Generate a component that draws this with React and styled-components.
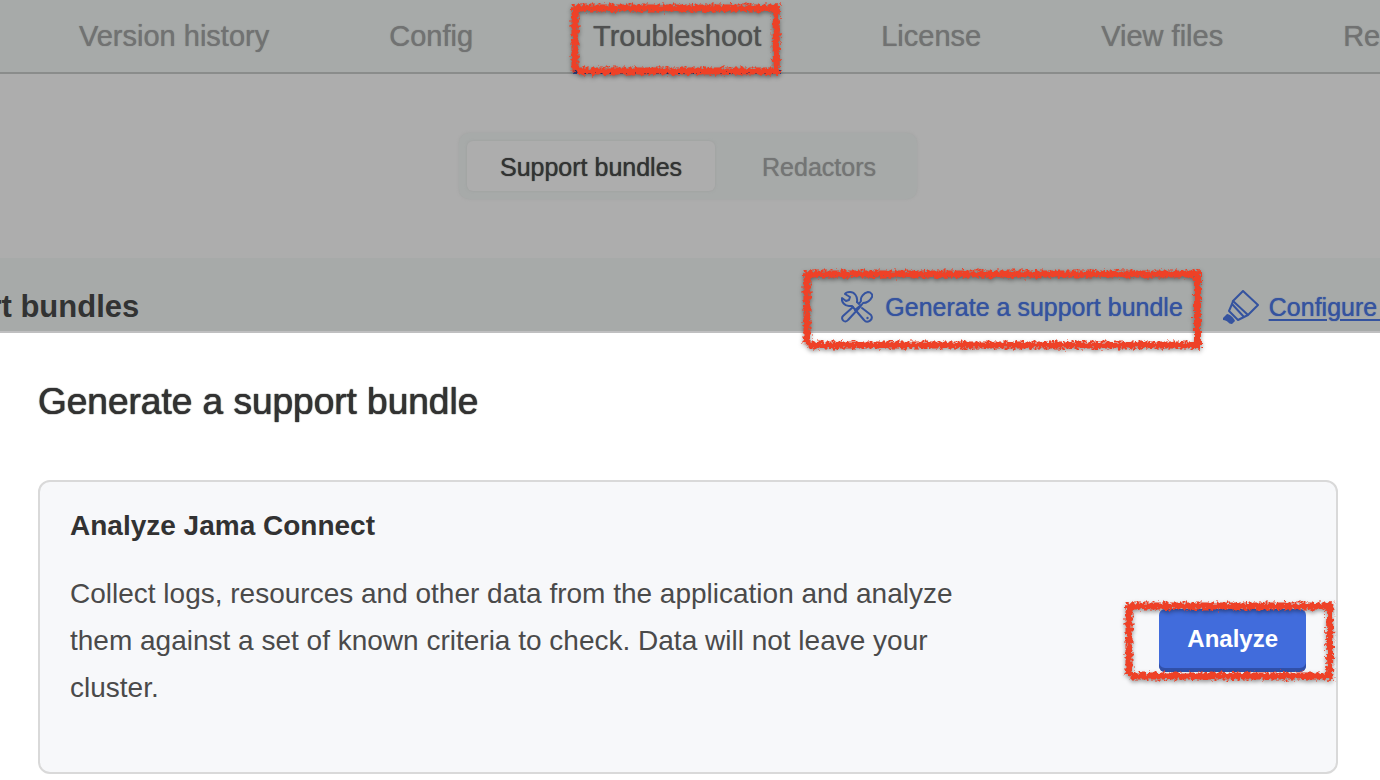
import React from 'react';
import styled, { createGlobalStyle } from 'styled-components';

const tabs = ['Version history', 'Config', 'Troubleshoot', 'License', 'View files', 'Registry settings'];

const BrushFrame = ({ top, right, bottom, left }) => (
  <Brush $top={top} $right={right} $bottom={bottom} $left={left} aria-hidden="true">
    <g filter="url(#brush)">
      <line x1="0" y1="0" x2="100%" y2="0" />
      <line x1="100%" y1="0" x2="100%" y2="100%" />
      <line x1="5" y1="100%" x2="100%" y2="100%" />
      <line x1="0" y1="0" x2="0" y2="94%" />
    </g>
  </Brush>
);

const BrushFilter = () => (
  <Defs aria-hidden="true">
    <filter id="brush" filterUnits="userSpaceOnUse" x="-12" y="-12" width="440" height="120" colorInterpolationFilters="sRGB">
      <feTurbulence type="fractalNoise" baseFrequency="0.35" numOctaves="2" seed="4" result="noise" />
      <feDisplacementMap in="SourceGraphic" in2="noise" scale="8" xChannelSelector="R" yChannelSelector="G" result="rough" />
      <feDropShadow in="rough" dx="0" dy="2" stdDeviation="2" floodColor="#000" floodOpacity="0.4" />
    </filter>
  </Defs>
);

const ToolsIcon = () => (
  <svg width="32" height="32" viewBox="0 0 32 32" fill="none" stroke="currentColor" strokeWidth="2" strokeLinejoin="round" strokeLinecap="round" aria-hidden="true">
    <path d="M16 11 C17 5 13 1 9 1 C7 1 5 1 4 3 L9 6 L8 9 L5 10 L1 7 C0 11 4 15 8 15 L11 15 L23 29 C26 33 33 29 30 24 L21 17" />
    <path d="M16 11 L18 13 L20 10 C19 6 23 2 27 1 C30 1 32 4 31 6 C29 10 26 12 22 12 L19 16 L7 29 C4 33 -1 28 2 25 L12 16" />
    <path d="M14 19 L20 14" />
    <circle cx="26.5" cy="27" r="1.2" fill="currentColor" stroke="none" />
  </svg>
);

const MarkerIcon = () => (
  <svg width="36" height="34" viewBox="0 0 36 34" fill="none" stroke="currentColor" strokeWidth="2" strokeLinejoin="round" aria-hidden="true">
    <path d="M20 1 L35 15 L25 25 L10 11 Z" />
    <path d="M10 11 L9 14 L21 27 L25 25 M9 14 L6 21 L15 30 L21 27" />
    <path d="M4 24 C7 24 11 28 12 31 L9 34 C5 34 5 30 0 30 L0 28 Z" fill="currentColor" stroke="none" />
  </svg>
);

const App = () => {
  return (
    <Page>
      <GlobalStyle />
      <BrushFilter />
      <Nav>
        {tabs.map((tab) => (
          <Tab key={tab} href="#" $active={tab === 'Troubleshoot'}>
            {tab}
            {tab === 'Troubleshoot' && <BrushFrame top={8} right={5} bottom={-1} left={2} />}
          </Tab>
        ))}
      </Nav>
      <ToggleArea>
        <Toggle>
          <ToggleButton type="button" $active>Support bundles</ToggleButton>
          <ToggleButton type="button">Redactors</ToggleButton>
        </Toggle>
      </ToggleArea>
      <SectionBar>
        <SectionTitle>Support bundles</SectionTitle>
        <Actions>
          <GenerateButton type="button">
            <ToolsIcon />
            Generate a support bundle
            <BrushFrame top={-15} right={-15} bottom={-20} left={-34} />
          </GenerateButton>
          <ConfigureLink href="#">
            <MarkerIcon />
            <span>Configure redaction</span>
          </ConfigureLink>
        </Actions>
      </SectionBar>
      <Dialog role="dialog" aria-labelledby="dialog-title">
        <DialogTitle id="dialog-title">Generate a support bundle</DialogTitle>
        <Card>
          <CardTitle>Analyze Jama Connect</CardTitle>
          <CardRow>
            <CardText>
              Collect logs, resources and other data from the application and analyze them against a set
              of known criteria to check. Data will not leave your cluster.
            </CardText>
            <AnalyzeButton type="button">
              Analyze
              <BrushFrame top={-3} right={-24} bottom={-4} left={-30} />
            </AnalyzeButton>
          </CardRow>
        </Card>
      </Dialog>
    </Page>
  );
};

const GlobalStyle = createGlobalStyle`
  * {
    box-sizing: border-box;
  }

  body {
    margin: 0;
    background: #fff;
    font-family: 'Liberation Sans', Arial, sans-serif;
  }

  button {
    font-family: inherit;
    border: 0;
    cursor: pointer;
  }
`;

const Page = styled.div`
  overflow: hidden;
  background: #adadad;
`;

const Defs = styled.svg`
  position: absolute;
  width: 0;
  height: 0;
`;

const Brush = styled.svg`
  position: absolute;
  z-index: 2;
  top: ${(props) => props.$top}px;
  left: ${(props) => props.$left}px;
  width: calc(100% - ${(props) => props.$left + props.$right}px);
  height: calc(100% - ${(props) => props.$top + props.$bottom}px);
  overflow: visible;
  pointer-events: none;

  line {
    stroke: #ee4127;
    stroke-width: 7px;
    stroke-linecap: square;
  }
`;

const Nav = styled.nav`
  display: flex;
  gap: 80px;
  padding-left: 59px;
  background: #a7aaa9;
  border-bottom: 2px solid #8a8c8b;
`;

const Tab = styled.a`
  position: relative;
  flex: none;
  padding: 20px 20px 18px;
  margin-bottom: -2px;
  border-bottom: 4px solid ${(props) => (props.$active ? '#2f4a91' : 'transparent')};
  color: ${(props) => (props.$active ? '#505151' : '#717272')};
  font-size: 29px;
  line-height: 32px;
  text-shadow: 0 0 1px currentColor;
  text-decoration: none;
  white-space: nowrap;
`;

const ToggleArea = styled.div`
  display: flex;
  justify-content: center;
  padding: 59px 4px 59px 0;
`;

const Toggle = styled.div`
  display: flex;
  gap: 14px;
  padding: 8px;
  background: #a7aaa9;
  border-radius: 10px;
  box-shadow: 0 0 3px #a0a2a1;
`;

const ToggleButton = styled.button`
  height: 50px;
  padding: 2px 33px 0;
  border-radius: 6px;
  background: ${(props) => (props.$active ? '#adadad' : 'transparent')};
  box-shadow: ${(props) => (props.$active ? '0 0 3px #9c9e9d' : 'none')};
  color: ${(props) => (props.$active ? '#323333' : '#747575')};
  font-size: 25px;
  text-shadow: 0 0 1px currentColor;
`;

const SectionBar = styled.div`
  display: flex;
  justify-content: space-between;
  margin: 0 -107px;
  padding: 31px 0 6px;
  background: #a7aaa9;
  border-bottom: 2px solid #bfbfc0;
`;

const SectionTitle = styled.h2`
  margin: 0;
  color: #323333;
  font-size: 31px;
  line-height: 36px;
`;

const Actions = styled.div`
  display: flex;
  gap: 40px;
  color: #35539f;
  font-size: 25px;
  line-height: 36px;
  text-shadow: 0 0 1px currentColor;
  white-space: nowrap;
`;

const GenerateButton = styled.button`
  position: relative;
  display: flex;
  align-items: center;
  gap: 12px;
  padding: 0;
  background: none;
  color: inherit;
  font-size: inherit;
  line-height: inherit;
  text-shadow: inherit;
`;

const ConfigureLink = styled.a`
  display: flex;
  align-items: center;
  gap: 10px;
  color: inherit;
  text-decoration: none;

  span {
    text-decoration: underline;
    text-decoration-thickness: 2px;
    text-underline-offset: 3px;
  }
`;

const Dialog = styled.section`
  padding: 47px 42px 6px 38px;
  background: #fff;
`;

const DialogTitle = styled.h1`
  margin: 0 0 56px;
  color: #323232;
  font-size: 37px;
  font-weight: 400;
  line-height: 44px;
  text-shadow: 0 0 1px currentColor, 0 0 1px currentColor;
`;

const Card = styled.div`
  padding: 28px 30px 61px;
  background: #f7f8fa;
  border: 2px solid #d9d9d9;
  border-radius: 12px;
`;

const CardTitle = styled.h3`
  margin: 0 0 28px;
  color: #323232;
  font-size: 28px;
  line-height: 32px;
`;

const CardRow = styled.div`
  display: flex;
  align-items: center;
  justify-content: space-between;
`;

const CardText = styled.p`
  width: 75%;
  margin: 0;
  color: #4a4a4a;
  font-size: 28px;
  line-height: 47px;
`;

const AnalyzeButton = styled.button`
  position: relative;
  height: 63px;
  padding: 0 28px 4px;
  border-radius: 6px;
  background: #416cdc;
  box-shadow: inset 0 -4px 0 #3150a8;
  color: #fff;
  font-size: 24px;
  font-weight: 700;
`;

export default App;
